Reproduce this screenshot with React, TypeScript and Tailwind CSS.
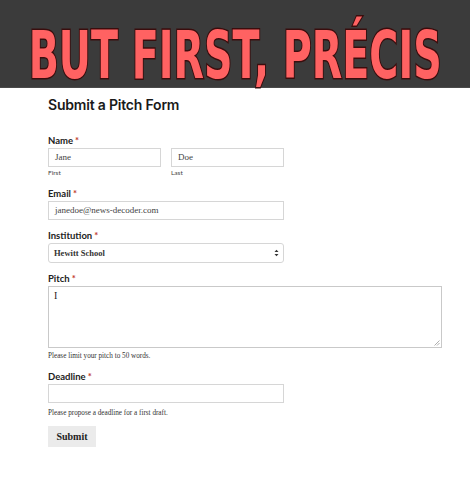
import React from "react";

function Label({ text, className }: { text: string; className?: string }) {
  return (
    <div
      className={`text-[9.5px] font-bold text-[#222] font-['Lato','Open_Sans',sans-serif] leading-[11px] ${className ?? ""}`}
    >
      {text}
      <span className="text-[#c0392b] ml-[2px]">*</span>
    </div>
  );
}

function TextBox({ value, className }: { value?: string; className?: string }) {
  return (
    <div
      className={`h-[19px] border border-[#d6d6d6] bg-white px-[6px] flex items-center text-[9px] text-[#444] font-['Liberation_Serif','DejaVu_Serif',serif] ${className ?? ""}`}
    >
      {value}
    </div>
  );
}

function Hint({ text, className }: { text: string; className?: string }) {
  return (
    <div
      className={`text-[7.2px] text-[#333] font-['Liberation_Serif','DejaVu_Serif',serif] leading-[10px] ${className ?? ""}`}
    >
      {text}
    </div>
  );
}

export default function App() {
  return (
    <div className="w-[470px] h-[480px] bg-white overflow-hidden">
      {/* Banner */}
      <div className="h-[88px] bg-[#3b3b3b] flex items-center justify-center border-b border-[#4a4a4a]">
        <span className="inline-block translate-y-[12px] scale-x-[0.6] text-[66px] leading-none font-bold text-[#ff6262] font-['DejaVu_Sans',sans-serif] [-webkit-text-stroke:3px_#3a0d0d] [paint-order:stroke_fill] whitespace-nowrap">
          BUT FIRST, PRÉCIS
        </span>
      </div>

      {/* Form */}
      <div className="pl-[48px] pt-[8px]">
        <h1 className="text-[14px] font-semibold text-[#1a1a1a] font-['Inter','Open_Sans',sans-serif] tracking-[-0.2px] leading-[18px]">
          Submit a Pitch Form
        </h1>

        <Label text="Name" className="mt-[21px]" />
        <div className="flex gap-[10px] mt-[2px]">
          <div className="w-[113px]">
            <TextBox value="Jane" />
            <div className="text-[6.5px] leading-[9px] text-[#444] font-['Lato',sans-serif] mt-[1px]">First</div>
          </div>
          <div className="w-[113px]">
            <TextBox value="Doe" />
            <div className="text-[6.5px] leading-[9px] text-[#444] font-['Lato',sans-serif] mt-[1px]">Last</div>
          </div>
        </div>

        <Label text="Email" className="mt-[11px]" />
        <TextBox value="janedoe@news-decoder.com" className="w-[236px] mt-[2px]" />

        <Label text="Institution" className="mt-[10px]" />
        <div className="w-[236px] h-[20px] mt-[2px] border border-[#d6d6d6] rounded-[3px] bg-white px-[5px] flex items-center justify-between text-[8.5px] text-[#333] font-bold font-['Liberation_Serif','DejaVu_Serif',serif]">
          <span>Hewitt School</span>
          <svg width="5" height="8" viewBox="0 0 5 8" className="mr-[-1px]">
            <path d="M0.5 3 L2.5 0.8 L4.5 3 Z" fill="#333" />
            <path d="M0.5 5 L2.5 7.2 L4.5 5 Z" fill="#333" />
          </svg>
        </div>

        <Label text="Pitch" className="mt-[10px]" />
        <div className="relative w-[394px] h-[62px] mt-[2px] border border-[#c9c9c9] bg-white">
          <div className="absolute left-[5px] top-[4px] text-[10px] text-[#222] font-['Liberation_Serif',serif] leading-none">I</div>
          <svg width="6" height="6" viewBox="0 0 6 6" className="absolute right-[1px] bottom-[1px]">
            <path d="M5.5 0.5 L0.5 5.5 M5.5 3 L3 5.5" stroke="#999" strokeWidth="0.8" />
          </svg>
        </div>
        <Hint text="Please limit your pitch to 50 words." className="mt-[3px]" />

        <Label text="Deadline" className="mt-[10px]" />
        <TextBox className="w-[236px] mt-[2px]" />
        <Hint text="Please propose a deadline for a first draft." className="mt-[5px]" />

        <button className="mt-[8px] w-[48px] h-[21px] bg-[#ebebeb] text-[10px] font-bold text-[#222] font-['Liberation_Serif','DejaVu_Serif',serif] flex items-center justify-center">
          Submit
        </button>
      </div>
    </div>
  );
}
